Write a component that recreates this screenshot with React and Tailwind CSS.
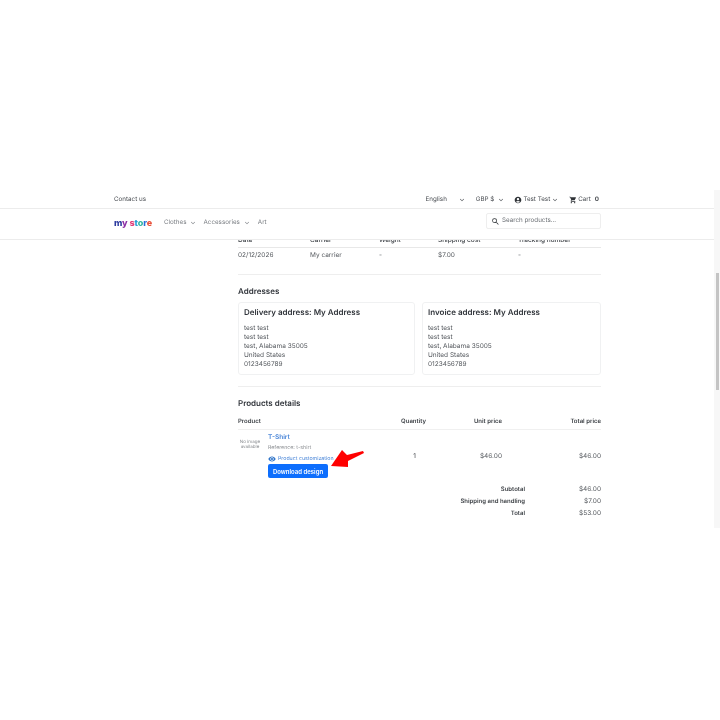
import React from 'react';
import { MdKeyboardArrowDown, MdAccountCircle, MdShoppingCart, MdSearch, MdVisibility } from 'react-icons/md';

const font = { fontFamily: 'Inter, sans-serif' };

const columns = 'grid grid-cols-[72px_69px_59px_80px_83px]';
const productColumns = 'grid grid-cols-[140px_57px_67px_99px]';

const addressLines = ['test test', 'test test', 'test, Alabama 35005', 'United States', '0123456789'];

const AddressCard = ({ title }) => (
  <div className="h-[73px] rounded-[3px] border border-[#f0f1f2] px-[5px] pt-[4px]">
    <h3 className="text-[8px] leading-[10px] font-semibold text-[#30343a] mb-[7px]">{title}</h3>
    {addressLines.map((line, i) => (
      <p key={i} className="text-[6.5px] leading-[9px] text-[#55595e]">{line}</p>
    ))}
  </div>
);

const Logo = () => (
  <span className="text-[9px] leading-none font-extrabold tracking-[-0.1px] whitespace-nowrap">
    <span className="text-[#2b3a9e]">m</span>
    <span className="text-[#8d2ea6]">y</span>
    <span> </span>
    <span className="text-[#e0407a]">s</span>
    <span className="text-[#27a0d8]">t</span>
    <span className="text-[#2fb5a0]">o</span>
    <span className="text-[#2b6fd8]">r</span>
    <span className="text-[#e8503a]">e</span>
  </span>
);

const TotalRow = ({ label, value }) => (
  <div className="flex h-[12px] items-center justify-end text-[6.5px]">
    <span className="pb-[1px] text-[6px] font-semibold text-[#3b3f44]">{label}</span>
    <span className="w-[76px] text-right text-[#55595e]">{value}</span>
  </div>
);

export default function App() {
  return (
    <div style={font} className="h-[720px] pt-[190px] overflow-hidden will-change-transform [text-rendering:geometricPrecision]">
      <div className="flex h-[338px]">
        <div className="flex-1 min-w-0 flex flex-col">
          {/* top bar */}
          <div className="h-[19px] shrink-0 border-b border-[#ececec] pl-[114px] pr-[115px] pt-[1px] flex items-center justify-between text-[6.25px] text-[#4a4e53]">
            <span>Contact us</span>
            <div className="flex items-center">
              <span>English</span>
              <MdKeyboardArrowDown className="ml-[11px] text-[8px]" />
              <span className="ml-[10px]">GBP $</span>
              <MdKeyboardArrowDown className="ml-[3px] text-[8px]" />
              <MdAccountCircle className="ml-[9px] text-[8px] text-[#2f3337]" />
              <span className="ml-[1px]">Test Test</span>
              <MdKeyboardArrowDown className="ml-[1px] text-[8px]" />
              <MdShoppingCart className="ml-[10px] text-[8px] text-[#2f3337]" />
              <span className="ml-[1px]">Cart</span>
              <span className="ml-[4px] font-bold">0</span>
            </div>
          </div>

          {/* nav */}
          <div className="h-[31px] shrink-0 border-b border-[#ececec] pl-[114px] pr-[113px] pb-[2px] flex items-center justify-between relative z-10 bg-white">
            <div className="flex items-center text-[6.25px] text-[#7b7f84]">
              <Logo />
              <span className="ml-[12px]">Clothes</span>
              <MdKeyboardArrowDown className="ml-[2px] text-[8px]" />
              <span className="ml-[7px]">Accessories</span>
              <MdKeyboardArrowDown className="ml-[3px] text-[8px]" />
              <span className="ml-[7px]">Art</span>
            </div>
            <div className="w-[115px] h-[16px] mb-[4px] rounded-[2px] border border-[#eeeeee] flex items-center pl-[4px] text-[6.25px] text-[#6c7075]">
              <MdSearch className="text-[9px] text-[#2f3337]" />
              <span className="ml-[2px]">Search products...</span>
            </div>
          </div>

          {/* page body */}
          <div className="flex-1 min-h-0 overflow-hidden pl-[238px] pr-[113px]">
            <div className="-mt-[6px]">
              <div className={`${columns} h-[14px] items-center border-b border-[#e8e8e8] text-[6.5px] font-medium text-[#3b3f44]`}>
                <span>Date</span>
                <span>Carrier</span>
                <span>Weight</span>
                <span>Shipping cost</span>
                <span>Tracking number</span>
              </div>
              <div className={`${columns} h-[14px] mt-[1px] items-center text-[6.5px] text-[#55595e]`}>
                <span>02/12/2026</span>
                <span>My carrier</span>
                <span>-</span>
                <span>$7.00</span>
                <span>-</span>
              </div>
              <div className="border-b border-[#eeeeee] mt-[11px]" />

              <h2 className="text-[8px] leading-[10px] font-semibold text-[#30343a] mt-[11px]">Addresses</h2>
              <div className="grid grid-cols-[177px_1fr] gap-[7px] mt-[6px]">
                <AddressCard title="Delivery address: My Address" />
                <AddressCard title="Invoice address: My Address" />
              </div>
              <div className="border-b border-[#eeeeee] mt-[11px]" />

              <h2 className="text-[8px] leading-[10px] font-semibold text-[#30343a] mt-[11px]">Products details</h2>

              {/* products table */}
              <div className={`${productColumns} h-[16px] mt-[6px] items-center border-b border-[#f0f0f0] text-[6px] font-semibold text-[#3b3f44]`}>
                <span>Product</span>
                <span className="text-right pr-[9px]">Quantity</span>
                <span className="text-right">Unit price</span>
                <span className="text-right">Total price</span>
              </div>
              <div className={`${productColumns} h-[54px] items-center text-[6.5px] text-[#55595e]`}>
                <div className="flex self-start pt-[3px]">
                  <div className="w-[30px] pt-[7px] text-[4.5px] leading-[5px] text-[#8a8d91]">
                    <div className="w-[24px] text-center">No image available</div>
                  </div>
                  <div className="relative">
                    <p className="text-[6.5px] leading-[8px] font-semibold text-[#4a86d8]">T-Shirt</p>
                    <p className="mt-[3px] text-[5.25px] leading-[8px] text-[#8a8d91]">Reference: t-shirt</p>
                    <p className="mt-[3px] flex items-center text-[5.25px] leading-[8px] text-[#3f7fd6] whitespace-nowrap">
                      <MdVisibility className="text-[8px] text-[#2f74c8]" />
                      <span className="ml-[2px]">Product customization</span>
                    </p>
                    <button className="block mt-[1px] w-[60px] h-[14px] rounded-[2px] bg-[#0d6efd] text-white text-[6px] font-semibold">
                      Download design
                    </button>
                    <svg className="absolute left-[63px] top-[16px]" width="33" height="19" viewBox="0 0 33 19">
                      <path d="M0 17 L11 1 L16 6 L32 2 L33 4 L17 12 L17 18 Z" fill="#ff0000" />
                    </svg>
                  </div>
                </div>
                <span className="text-right pr-[19px] text-[#3b3f44]">1</span>
                <span className="text-right">$46.00</span>
                <span className="text-right">$46.00</span>
              </div>
              <div>
                <TotalRow label="Subtotal" value="$46.00" />
                <TotalRow label="Shipping and handling" value="$7.00" />
                <TotalRow label="Total" value="$53.00" />
              </div>
            </div>
          </div>
        </div>

        {/* scrollbar */}
        <div className="w-[6px] shrink-0 bg-[#f7f7f7] pt-[83px] pl-[2px]">
          <div className="w-[3px] h-[117px] bg-[#c4c4c4]" />
        </div>
      </div>
    </div>
  );
}
